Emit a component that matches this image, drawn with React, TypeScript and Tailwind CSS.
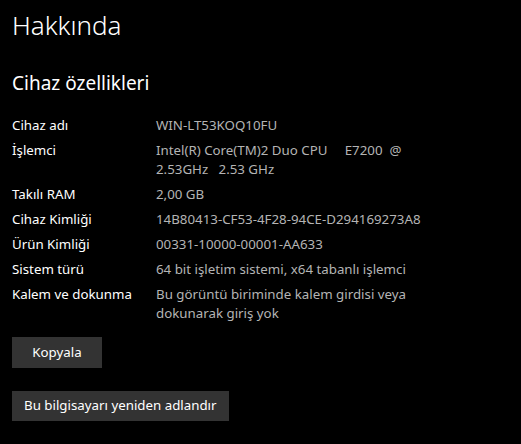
import React from "react";

const specs: { label: string; value: string[] }[] = [
  { label: "Cihaz adı", value: ["WIN-LT53KOQ10FU"] },
  { label: "İşlemci", value: ["Intel(R) Core(TM)2 Duo CPU     E7200  @", "2.53GHz   2.53 GHz"] },
  { label: "Takılı RAM", value: ["2,00 GB"] },
  { label: "Cihaz Kimliği", value: ["14B80413-CF53-4F28-94CE-D294169273A8"] },
  { label: "Ürün Kimliği", value: ["00331-10000-00001-AA633"] },
  { label: "Sistem türü", value: ["64 bit işletim sistemi, x64 tabanlı işlemci"] },
  { label: "Kalem ve dokunma", value: ["Bu görüntü biriminde kalem girdisi veya", "dokunarak giriş yok"] },
];

export default function App() {
  return (
    <div className="w-[521px] h-[444px] bg-black text-white overflow-hidden font-['Noto_Sans',sans-serif] px-3">
      <h1 className="text-[26px] font-light leading-none pt-[12px]">Hakkında</h1>

      <h2 className="text-[19px] leading-none mt-[36px]">Cihaz özellikleri</h2>

      <div className="flex flex-col gap-[6px] mt-[23px] text-[13.3px] leading-[19px]">
        {specs.map((s) => (
          <div key={s.label} className="flex">
            <div className="w-[144px] shrink-0">{s.label}</div>
            <div className="text-[#b4b4b4] whitespace-pre">
              {s.value.map((line, i) => (
                <div key={i}>{line}</div>
              ))}
            </div>
          </div>
        ))}
      </div>

      <button className="block mt-[14px] w-[90px] h-[31px] bg-[#333333] text-[13.3px]">Kopyala</button>
      <button className="block mt-[23px] h-[30px] px-[12px] bg-[#333333] text-[13.3px]">
        Bu bilgisayarı yeniden adlandır
      </button>
    </div>
  );
}
